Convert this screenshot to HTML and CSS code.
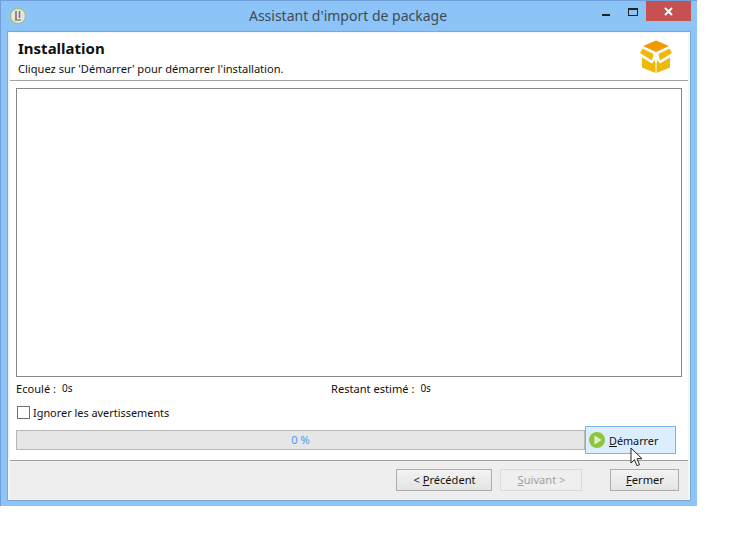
FILE: index.html
```html
<!DOCTYPE html>
<html lang="fr">
  <head>
    <meta charset="UTF-8" />
    <title>Assistant d'import de package</title>
    <link rel="stylesheet" href="styles.css">
  </head>
  <body>
    <div class="window">
      <div class="titlebar">
        <svg class="app-icon" width="18" height="18" viewBox="0 0 18 18">
          <circle cx="9" cy="9" r="7.5" fill="#e6e6e0" stroke="#9fc05a" stroke-width="1" />
          <path d="M7 4v9M10.500 4v7" stroke="#77776f" stroke-width="1.600" fill="none" />
          <path d="M6 13h6" stroke="#8d8d85" stroke-width="1.500" />
        </svg>
        <div class="title">Assistant d'import de package</div>
        <div class="controls">
          <span class="ctl-min"></span>
          <span class="ctl-max"></span>
          <span class="ctl-close">
            <svg width="9" height="9" viewBox="0 0 9 9"><path d="M1 1l7 7M8 1l-7 7" stroke="#fff" stroke-width="2" /></svg>
          </span>
        </div>
      </div>
      <div class="client">
        <div class="header">
          <div>
            <h1>Installation</h1>
            <p>Cliquez sur 'Démarrer' pour démarrer l'installation.</p>
          </div>
          <svg class="logo" width="34" height="34" viewBox="0 0 34 34">
            <polygon points="17,0.500 30,6 17,12 4,6" fill="#f09a00" />
            <polygon points="1,13 3.500,8.500 14.500,14 13,20.500" fill="#efb90a" />
            <polygon points="33,13 30.500,8.500 19.500,14 21,20.500" fill="#efb90a" />
            <polygon points="3,17.500 13,23.500 15.500,20 16.500,24 16.500,33 3,27.500" fill="#efb90a" />
            <polygon points="31,17.500 21,23.500 18.500,20 17.500,24 17.500,33 31,27.500" fill="#efb90a" />
          </svg>
        </div>
        <div class="content">
          <div class="log"></div>
          <div class="times">
            <div class="time time-left"><span class="lbl">Ecoulé :</span><span class="val">0s</span></div>
            <div class="time"><span class="lbl">Restant estimé :</span><span class="val">0s</span></div>
          </div>
          <label class="check"><input type="checkbox"> Ignorer les avertissements</label>
          <div class="progress-row">
            <div class="progress">0 %</div>
            <button class="start">
              <svg width="16" height="16" viewBox="0 0 16 16">
                <circle cx="8" cy="8" r="8" fill="#8cc63f" />
                <polygon points="5.500,3.500 12.500,8 5.500,12.500" fill="#eef6d8" />
                <polygon points="7.500,6.500 10,8 7.500,9.500" fill="#bcdc80" />
              </svg>
              <span><u>D</u>émarrer</span>
            </button>
            <svg class="cursor" width="13" height="20" viewBox="0 0 13 20">
              <path d="M1 1v15l3.500-3.300 2.500 6 2.500-1-2.500-6h5z" fill="#fff" stroke="#222" stroke-width="1" />
            </svg>
          </div>
        </div>
        <div class="footer">
          <button class="btn btn-prev">&lt; <u>P</u>récédent</button>
          <button class="btn btn-next" disabled><u>S</u>uivant &gt;</button>
          <button class="btn btn-close"><u>F</u>ermer</button>
        </div>
      </div>
    </div>
  </body>
</html>
```

FILE: styles.css
```css
* {
    box-sizing: border-box;
}

body {
    margin: 0;
    background: #fff;
    font-family: "Noto Sans", sans-serif;
    font-size: 11.1px;
    color: #111;
}

.window {
    width: 697px;
    height: 506px;
    background: #8cc4f8;
    border: 1px solid #6f9fd6;
    border-right: none;
    border-bottom: none;
    display: flex;
    flex-direction: column;
}

.titlebar {
    height: 30px;
    flex: none;
    display: flex;
    position: relative;
}

.app-icon {
    position: absolute;
    left: 8px;
    top: 6px;
}

.title {
    flex: 1;
    text-align: center;
    font-size: 14px;
    line-height: 30px;
    color: #404a55;
    padding-right: 2px;
}

.controls {
    position: absolute;
    right: 6px;
    top: 0;
    display: flex;
}

.ctl-min {
    width: 8px;
    height: 2px;
    background: #222;
    margin-top: 13px;
    margin-right: 18px;
}

.ctl-max {
    width: 10px;
    height: 8px;
    border: 1px solid #222;
    border-top-width: 2px;
    margin-top: 7px;
    margin-right: 8px;
}

.ctl-close {
    width: 45px;
    height: 20px;
    background: #c75050;
    display: flex;
    align-items: center;
    justify-content: center;
}

.client {
    flex: 1;
    margin: 0 6px 5px 6px;
    background: #f5f5f5;
    border: 1px solid #7ba7d4;
    padding: 1px 2px 0 2px;
    display: flex;
    flex-direction: column;
}

.header {
    height: 48px;
    flex: none;
    background: #fff;
    border-bottom: 1px solid #a0a0a0;
    display: flex;
    justify-content: space-between;
    padding: 6px 15px 0 8px;
}

h1 {
    margin: 0;
    font-size: 15px;
    line-height: 19px;
    font-weight: bold;
}

.header p {
    margin: 3px 0 0;
    line-height: 16px;
}

.logo {
    margin-top: 1px;
}

.content {
    flex: 1;
    background: #fff;
    padding: 7px 6px 0 6px;
}

.log {
    height: 289px;
    border: 1px solid #84888c;
    background: #fff;
}

.times {
    display: flex;
    margin-top: 4px;
    line-height: 16px;
}

.time-left {
    width: 315px;
}

.lbl {
    margin-right: 6px;
}

.val {
    font-size: 10px;
    position: relative;
    top: -1px;
}

.check {
    display: flex;
    align-items: center;
    gap: 3px;
    margin-top: 7px;
    margin-left: 1px;
    height: 16px;
    font-size: 10.9px;
}

.check input {
    appearance: none;
    margin: 0;
    width: 13px;
    height: 13px;
    background: #fff;
    border: 1px solid #707070;
}

.progress-row {
    position: relative;
    display: flex;
    align-items: center;
    margin-top: 6px;
    height: 28px;
}

.progress {
    width: 569px;
    height: 20px;
    background: #e6e6e6;
    border: 1px solid #b8b8b8;
    color: #4a9cf0;
    text-align: center;
    line-height: 18px;
}

.start {
    width: 91px;
    height: 28px;
    padding: 0 0 0 3px;
    background: #dcedfd;
    border: 1px solid #7db4ea;
    display: flex;
    align-items: center;
    gap: 4px;
    font: inherit;
    font-size: 10.8px;
    color: #111;
}

.cursor {
    position: absolute;
    left: 614px;
    top: 21px;
}

.footer {
    flex: none;
    height: 40px;
    background: #eee;
    border-top: 1px solid #a0a0a0;
    display: flex;
    align-items: flex-start;
    padding: 8px 0 0 386px;
}

.btn {
    height: 22px;
    background: linear-gradient(#f2f2f2, #e4e4e4);
    border: 1px solid #acacac;
    padding: 0 0 2px 1px;
    font: inherit;
    color: #111;
}

.btn-prev {
    width: 96px;
}

.btn-next {
    width: 82px;
    margin-left: 8px;
    background: #efefef;
    border-color: #d9d9d9;
    color: #a0a0a0;
}

.btn-close {
    width: 69px;
    margin-left: 28px;
}
```
